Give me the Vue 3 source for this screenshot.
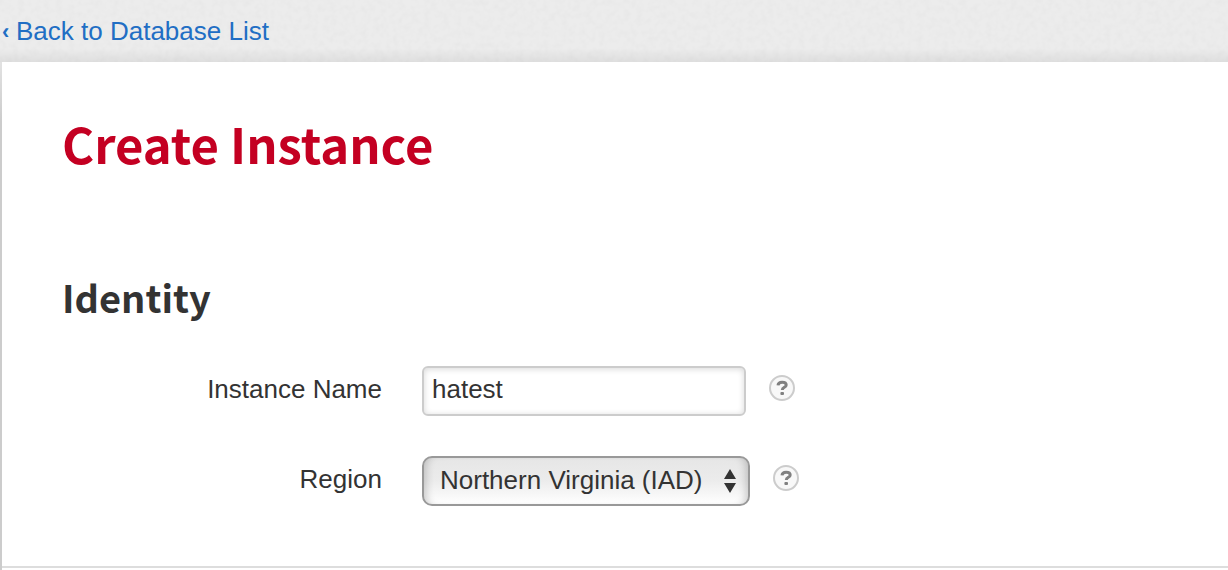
<script setup>
import { ref } from 'vue'

const name = ref('hatest')
const region = ref('IAD')
const regions = [{ code: 'IAD', label: 'Northern Virginia (IAD)' }]
</script>

<template>
  <div class="page">
    <header class="topbar">
      <svg class="grain" aria-hidden="true">
        <filter id="paper">
          <feTurbulence type="fractalNoise" baseFrequency="0.16" numOctaves="2" seed="4" stitchTiles="stitch" />
          <feColorMatrix values="0 0 0 0 0.5  0 0 0 0 0.5  0 0 0 0 0.5  0.18 0 0 0 -0.07" />
        </filter>
        <rect width="100%" height="100%" filter="url(#paper)" />
      </svg>
      <a class="back" href="#"><span class="chevron">‹</span>Back to Database List</a>
    </header>

    <main class="panel">
      <form class="content" @submit.prevent>
        <h1>Create Instance</h1>
        <h2>Identity</h2>

        <div class="row">
          <label for="instance-name">Instance Name</label>
          <input id="instance-name" v-model="name" class="field" type="text" />
          <button class="help" type="button" aria-label="Help with instance name">
            <svg viewBox="0 0 26 26">
              <circle cx="13" cy="13" r="12" />
              <path d="M9 10.4C9.2 8 10.8 7.2 13.1 7.2c2.6 0 4.1 1 4.1 2.8 0 2.5-3.9 2.1-3.9 5" />
              <rect x="11.4" y="17" width="3.6" height="3" rx="1" />
            </svg>
          </button>
        </div>

        <div class="row">
          <label for="region">Region</label>
          <div class="picker">
            <select id="region" v-model="region">
              <option v-for="r in regions" :key="r.code" :value="r.code">{{ r.label }}</option>
            </select>
            <svg class="arrows" viewBox="0 0 12 24" aria-hidden="true">
              <path d="M6 0l6 10H0zM0 14h12L6 24z" />
            </svg>
          </div>
          <button class="help" type="button" aria-label="Help with region">
            <svg viewBox="0 0 26 26">
              <circle cx="13" cy="13" r="12" />
              <path d="M9 10.4C9.2 8 10.8 7.2 13.1 7.2c2.6 0 4.1 1 4.1 2.8 0 2.5-3.9 2.1-3.9 5" />
              <rect x="11.4" y="17" width="3.6" height="3" rx="1" />
            </svg>
          </button>
        </div>
      </form>
    </main>
  </div>
</template>

<style>
body {
  margin: 0;
  background: #fff;
}
</style>

<style scoped>
.page {
  display: flex;
  flex-direction: column;
  min-height: 100vh;
  color: #333;
  font: 26px/32px "Liberation Sans", Arial, sans-serif;
}

.topbar {
  position: relative;
  height: 62px;
  background: #ececec;
}

.topbar::after {
  content: "";
  position: absolute;
  inset: auto 0 0;
  height: 14px;
  background: linear-gradient(rgba(0, 0, 0, 0), rgba(0, 0, 0, 0.06));
}

.grain {
  position: absolute;
  inset: 0;
  width: 100%;
  height: 100%;
}

.back {
  position: relative;
  display: flex;
  width: max-content;
  padding: 15px 0 0 2px;
  color: #216ec4;
  text-decoration: none;
}

.chevron {
  width: 14px;
  font-size: 22px;
  font-weight: 700;
  line-height: 34px;
}

.panel {
  flex: 1;
  padding-left: 2px;
  background: linear-gradient(#e2e2e2, #ccc 60px) left / 2px 100% no-repeat;
}

.content {
  padding: 45px 60px 60px;
  border-bottom: 2px solid #ddd;
}

h1,
h2 {
  margin: 0;
  font-family: "Noto Sans CJK SC", sans-serif;
  font-weight: 700;
}

h1 {
  color: #c40022;
  font-size: 49px;
  line-height: 72px;
}

h2 {
  margin: 86px 0 37px;
  font-size: 38px;
  line-height: 64px;
}

.row {
  display: flex;
  align-items: center;
}

.row + .row {
  margin-top: 40px;
}

label {
  flex: none;
  width: 320px;
  margin-right: 40px;
  padding-bottom: 4px;
  text-align: right;
}

.field {
  box-sizing: border-box;
  width: 324px;
  height: 50px;
  padding: 0 8px 4px;
  border: 2px solid #ccc;
  border-radius: 6px;
  background: #fff;
  box-shadow: inset 0 1px 6px rgba(0, 0, 0, 0.16);
  color: #333;
  font: inherit;
  outline: none;
}

.picker {
  position: relative;
  width: 328px;
}

select {
  display: block;
  box-sizing: border-box;
  width: 100%;
  height: 50px;
  padding: 0 40px 2px 16px;
  border: 2px solid #999;
  border-radius: 10px;
  appearance: none;
  background: linear-gradient(#e6e6e6, #ececec 50%, #fff);
  box-shadow: inset 8px 0 8px -6px rgba(0, 0, 0, 0.2), inset -8px 0 8px -6px rgba(0, 0, 0, 0.2);
  color: #333;
  font: inherit;
  outline: none;
}

.arrows {
  position: absolute;
  top: 13px;
  right: 14px;
  width: 12px;
  height: 24px;
  fill: #333;
  pointer-events: none;
}

.help {
  width: 26px;
  height: 26px;
  margin: 0 0 6px 23px;
  padding: 0;
  border: 0;
  background: none;
}

.help svg {
  display: block;
  width: 26px;
  height: 26px;
}

.help circle {
  fill: #f8f8f8;
  stroke: #ccc;
  stroke-width: 2;
}

.help path {
  fill: none;
  stroke: #808080;
  stroke-width: 3;
}

.help rect {
  fill: #808080;
}
</style>
